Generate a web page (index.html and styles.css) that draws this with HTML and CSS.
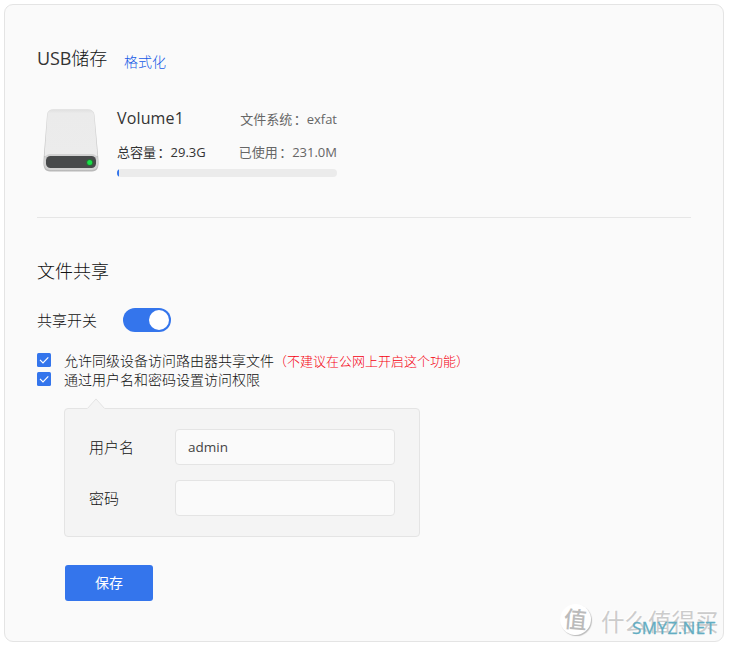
FILE: index.html
```html
<!DOCTYPE html>
<html lang="zh-CN">
<head>
<meta charset="utf-8">
<title>USB储存</title>
<link rel="stylesheet" href="styles.css">
</head>
<body>
<main class="card">
  <header class="heading">
    <h2 class="title"><span class="latin">USB</span>储存</h2>
    <a class="format">格式化</a>
  </header>
  <section class="volume">
    <svg class="disk" width="58" height="66" viewBox="0 0 58 66">
      <defs>
        <linearGradient id="top" x1="0" y1="0" x2="0" y2="1"><stop offset="0" stop-color="#dfdfdf"/><stop offset=".08" stop-color="#ebebeb"/><stop offset="1" stop-color="#ececec"/></linearGradient>
        <linearGradient id="base" x1="0" y1="0" x2="0" y2="1"><stop offset="0" stop-color="#d8d8d8"/><stop offset="1" stop-color="#b9b9b9"/></linearGradient>
      </defs>
      <path d="M11 1.500H46Q52 1.500 52.500 7L56.500 52Q57.500 63.500 50 63.500H8Q.500 63.500 1.500 52L5 7Q5.500 1.500 11 1.500Z" fill="url(#base)"/>
      <path d="M11 1.500H46Q51.500 1.500 52 7L55.500 48H2.500L5.500 7Q6 1.500 11 1.500Z" fill="url(#top)"/>
      <rect x="2" y="46" width="54" height="16" rx="6" fill="#d2d2d2"/>
      <rect x="4" y="48" width="50" height="12" rx="4.500" fill="#484a4b"/>
      <circle cx="47.700" cy="54.500" r="3.600" fill="#2c6b38"/>
      <circle cx="47.700" cy="54.500" r="2.500" fill="#17df48"/>
    </svg>
    <div class="details">
      <div class="line first"><span class="name">Volume1</span><span class="muted system">文件系统<span class="colon">：</span>exfat</span></div>
      <div class="line"><span class="total">总容量<span class="colon">：</span>29.3G</span><span class="muted">已使用<span class="colon">：</span>231.0M</span></div>
      <div class="progress"><div class="used"></div></div>
    </div>
  </section>
  <section class="sharing">
    <h2 class="title">文件共享</h2>
    <div class="switch-row"><span>共享开关</span><span class="switch"><i class="knob"></i></span></div>
    <div class="check"><svg class="box" width="14" height="14" viewBox="0 0 14 14"><rect width="14" height="14" rx="1.500" fill="#3475ec"/><path d="M3 6.800L6 9.800L11.300 4.400" fill="none" stroke="#fff" stroke-width="1.200"/></svg><span>允许同级设备访问路由器共享文件<em class="warning">（不建议在公网上开启这个功能）</em></span></div>
    <div class="check"><svg class="box" width="14" height="14" viewBox="0 0 14 14"><rect width="14" height="14" rx="1.500" fill="#3475ec"/><path d="M3 6.800L6 9.800L11.300 4.400" fill="none" stroke="#fff" stroke-width="1.200"/></svg><span>通过用户名和密码设置访问权限</span></div>
    <form class="panel">
      <svg class="arrow" width="18" height="11" viewBox="0 0 18 11"><path d="M0 11V10.500L9 .700L18 10.500V11Z" fill="#f4f4f4"/><path d="M.500 10.500L9 .900L17.500 10.500" fill="none" stroke="#e4e4e4"/></svg>
      <label class="field"><span class="label">用户名</span><input class="input" type="text" value="admin"></label>
      <label class="field"><span class="label">密码</span><input class="input" type="password"></label>
    </form>
    <button class="save" type="button">保存</button>
  </section>
  <div class="watermark">
    <span class="seal">值</span><span class="brand">什么值得买</span><span class="site">SMYZ.NET</span>
  </div>
</main>
</body>
</html>
```

FILE: styles.css
```css
* { box-sizing: border-box; }
body {
  margin: 0;
  padding: 4px;
  background: #fff;
  color: #333;
  font: 14px/20px "Open Sans", "Noto Sans CJK SC", sans-serif;
}
.card {
  position: relative;
  width: 720px;
  height: 638px;
  padding: 41px 32px 0;
  border: 1px solid #e4e4e4;
  border-radius: 9px;
  background: #fafafa;
}
.heading { display: flex; height: 24px; }
.title { margin: 0; color: #111; font-size: 18px; font-weight: 300; line-height: 24px; white-space: nowrap; }
.heading .title { width: 87px; }
.latin { color: #333; font-weight: 400; letter-spacing: -.1px; }
.format { margin-top: 6px; color: #1459e6; font-weight: 300; }
.volume {
  display: flex;
  gap: 17px;
  height: 148px;
  padding: 38px 0 0 5px;
  width: 654px;
  border-bottom: 1px solid #e6e6e6;
}
.details { width: 220px; }
.line { display: flex; justify-content: space-between; height: 20px; margin-bottom: 7px; font-size: 13px; white-space: nowrap; }
.first { margin-bottom: 14px; }
.name { font-size: 16px; letter-spacing: .15px; }
.system { margin-top: 1px; }
.colon { display: inline-block; width: 14.500px; text-indent: 1.500px; }
.muted { color: #666; }
.progress { height: 8px; border-radius: 4px; background: #ebebeb; overflow: hidden; }
.used { width: 2px; height: 8px; background: #3475ec; }
.sharing { padding-top: 41px; }
.switch-row { display: flex; align-items: center; gap: 26px; height: 24px; margin: 25px 0 19px; color: #111; font-size: 15px; font-weight: 300; }
.switch { width: 48px; height: 24px; padding: 2px; border-radius: 12px; background: #3475ec; }
.knob { display: block; width: 20px; height: 20px; margin-left: 24px; border-radius: 50%; background: #fff; }
.check { display: flex; gap: 13px; height: 19px; color: #111; font-weight: 300; white-space: nowrap; }
.box { margin-top: 2px; }
.warning { color: #f50010; font-size: 13px; font-style: normal; }
.panel {
  position: relative;
  display: flex;
  flex-direction: column;
  gap: 15px;
  width: 356px;
  height: 129px;
  margin: 19px 0 28px 27px;
  padding: 20px 24px;
  border: 1px solid #e4e4e4;
  border-radius: 4px;
  background: #f4f4f4;
}
.arrow { position: absolute; left: 22px; top: -11px; }
.field { display: flex; align-items: center; height: 36px; }
.label { width: 86px; color: #111; font-size: 15px; font-weight: 300; }
.input { width: 220px; height: 36px; padding: 0 12px; border: 1px solid #e4e4e4; border-radius: 4px; background: #fafafa; color: #444; font: inherit; font-size: 13.500px; outline: none; }
.save { display: block; width: 88px; height: 36px; margin-left: 28px; border: 0; border-radius: 3px; background: #3475ec; color: #fff; font: inherit; }
.watermark { position: absolute; left: 555px; top: 597px; width: 164px; height: 38px; color: #ccc; font-family: "Noto Sans CJK SC", sans-serif; white-space: nowrap; }
.seal { position: absolute; left: 0; top: 2px; width: 31px; height: 31px; border-radius: 50%; background: #fff; box-shadow: 1px 1px 1px #bbb; color: #bbb; font-size: 23px; font-weight: 500; line-height: 29px; text-align: center; transform: rotate(5deg); }
.brand { position: absolute; left: 41px; top: 0; font-size: 23.500px; line-height: 38px; text-shadow: -1px -1px 0 #fff; }
.site { position: absolute; left: 72px; top: 16px; color: #63adc2; font: 17px/20px "Open Sans", sans-serif; letter-spacing: .45px; -webkit-text-stroke: .3px #63adc2; }
```
